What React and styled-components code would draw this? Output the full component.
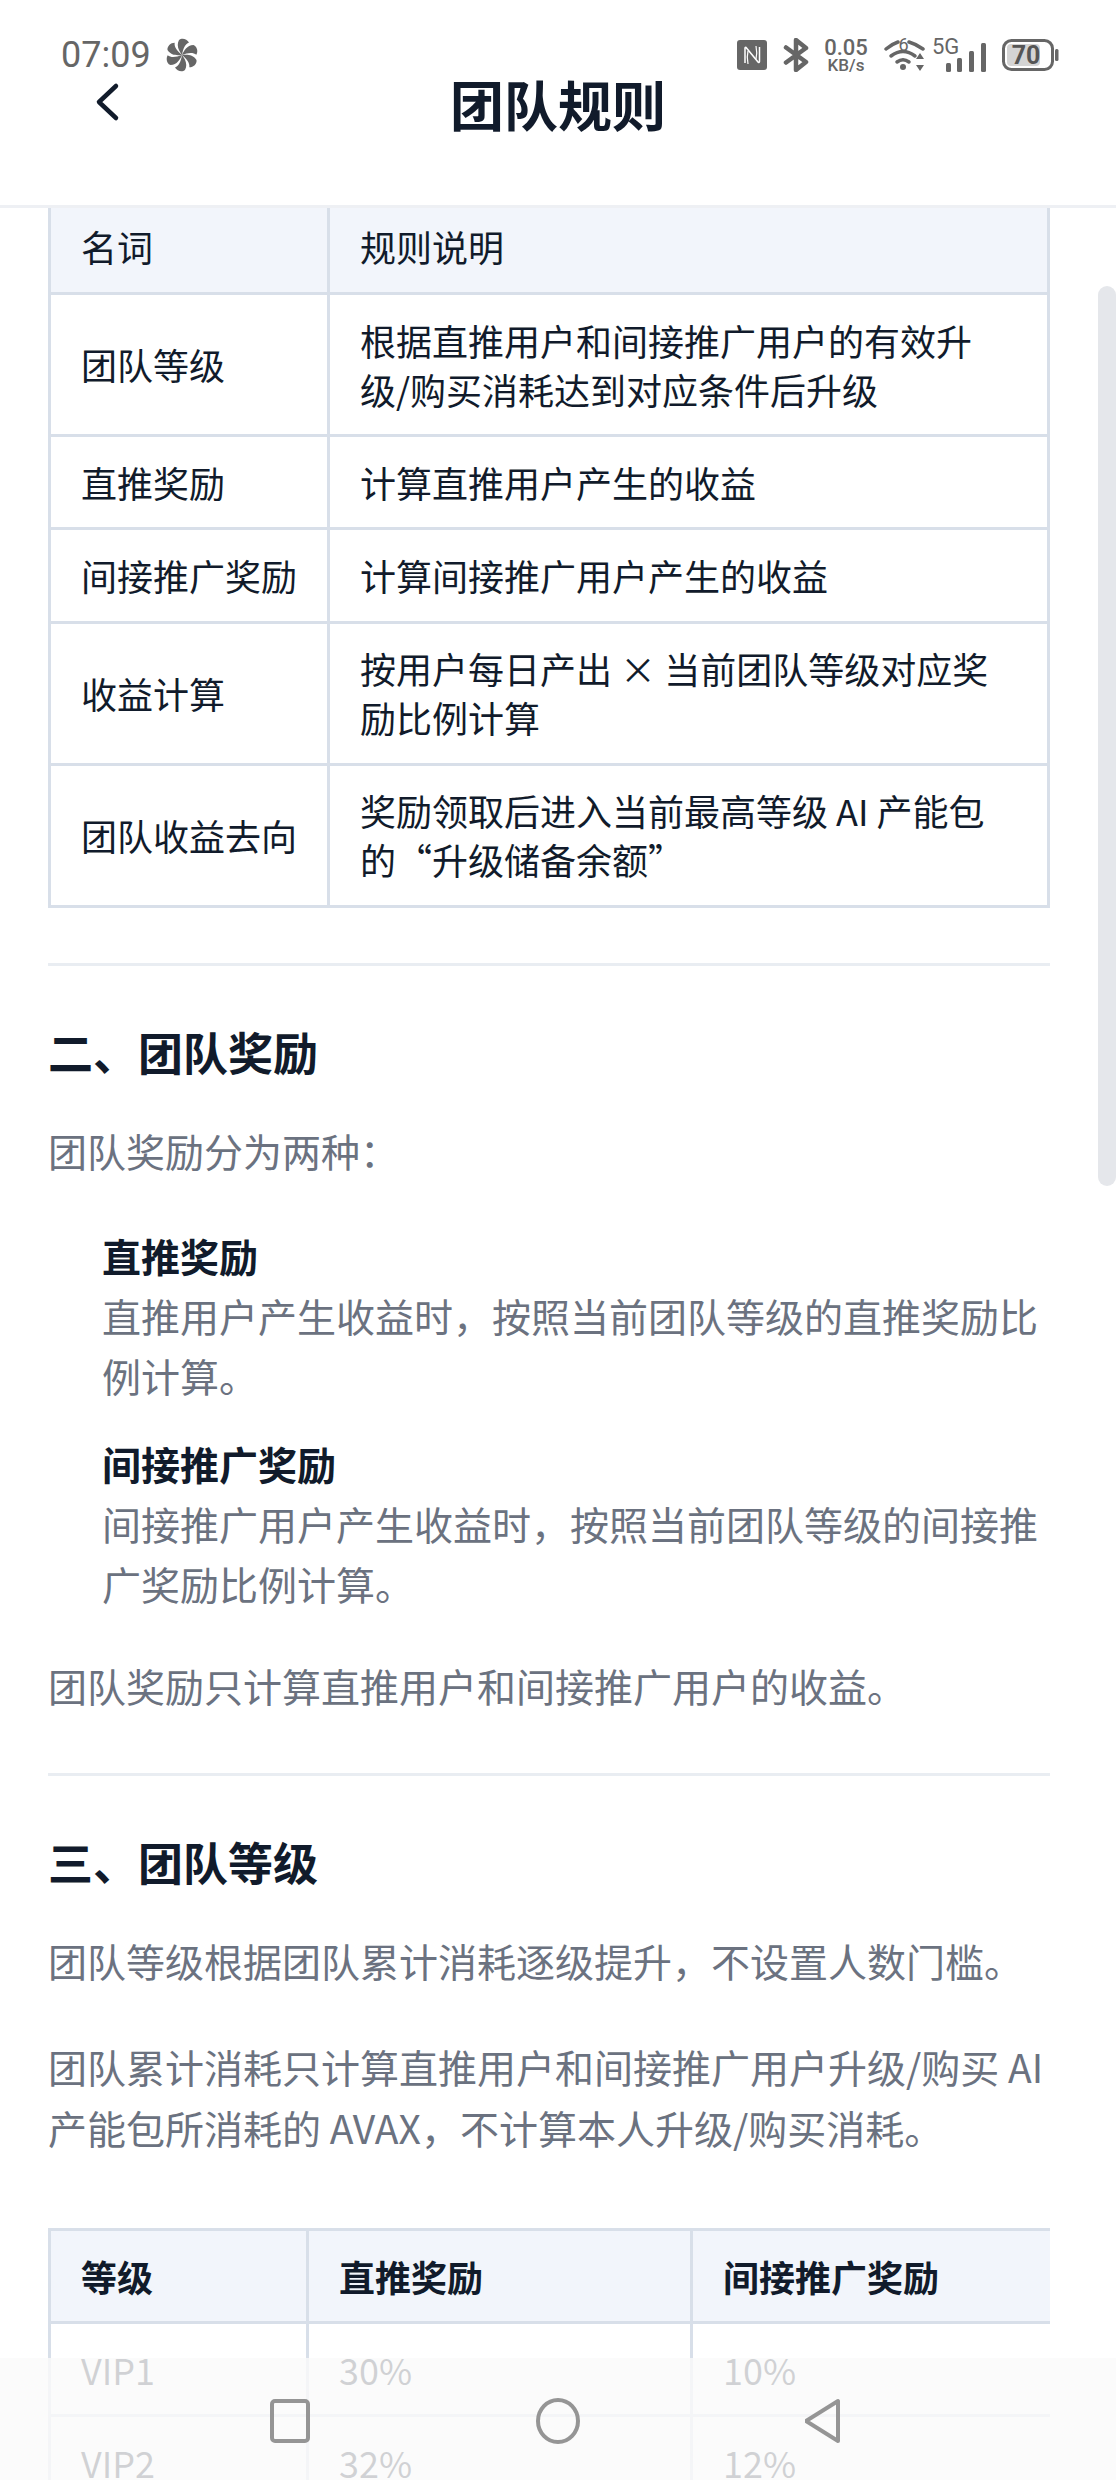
import React from "react";
import styled, { createGlobalStyle } from "styled-components";

const GlobalStyle = createGlobalStyle`
  html, body {
    margin: 0;
    padding: 0;
    background: #fff;
  }
  * {
    box-sizing: border-box;
  }
`;

const cjk = `"Noto Sans CJK SC", "Noto Sans", sans-serif`;

const Screen = styled.div`
  position: relative;
  width: 1116px;
  height: 2480px;
  overflow: hidden;
  background: #fff;
  font-family: ${cjk};
  color: #111b2b;
`;

const StatusBar = styled.div`
  position: absolute;
  top: 36px;
  left: 61px;
  right: 57px;
  height: 38px;
  display: flex;
  align-items: center;
  justify-content: space-between;
  color: #666;
`;

const StatusLeft = styled.div`
  display: flex;
  align-items: center;
  gap: 15px;
`;

const Clock = styled.span`
  font-family: Roboto, sans-serif;
  font-size: 36px;
  line-height: 38px;
`;

const StatusRight = styled.div`
  display: flex;
  align-items: center;
  gap: 16px;
`;

const Speed = styled.div`
  display: flex;
  flex-direction: column;
  align-items: center;
  font-family: Roboto, sans-serif;
  font-weight: 500;
  line-height: 1;
  width: 42px;
`;

const SpeedValue = styled.span`
  font-size: 22px;
  line-height: 19px;
`;

const SpeedUnit = styled.span`
  font-size: 17px;
  line-height: 16px;
`;

const WifiSvg = styled.svg`
  margin-right: -9px;
`;

const Header = styled.header`
  display: grid;
  grid-template-columns: 1fr auto 1fr;
  align-items: center;
  height: 208px;
  padding-top: 2px;
  border-bottom: 3px solid #eef0f4;
`;

const BackButton = styled.button`
  justify-self: start;
  margin: 0 0 4px 94px;
  padding: 0;
  border: 0;
  background: none;
  display: flex;
  color: #111b2b;
`;

const Title = styled.h1`
  margin: 0;
  font-size: 54px;
  line-height: 70px;
  font-weight: 700;
`;

const Content = styled.main`
  padding: 0 66px 0 48px;
`;

const TableClip = styled.div`
  overflow: hidden;
  width: 1002px;
  margin-top: ${(p) => p.$top || 0}px;
`;

const Table = styled.table`
  border-collapse: collapse;
  table-layout: fixed;
  width: ${(p) => p.$width}px;
  font-size: 36px;
  line-height: 49px;
  border: 3px solid #d8dfe9;
  border-top: ${(p) => (p.$cut ? "0" : "3px solid #d8dfe9")};
`;

const HeadCell = styled.th`
  background: #f2f5fb;
  border: 3px solid #d8dfe9;
  ${(p) => p.$cut && "border-top: 0;"}
  padding: ${(p) => (p.$cut ? "14px 30px 21px" : "20.6px 30px")};
  text-align: left;
  font-weight: ${(p) => (p.$bold ? 700 : 400)};
`;

const Cell = styled.td`
  border: 3px solid #d8dfe9;
  padding: 20.6px 30px;
  vertical-align: middle;
  white-space: pre-line;
`;

const TermCell = styled(Cell)`
  padding-right: 0;
  white-space: nowrap;
`;

const Rule = styled.hr`
  margin: ${(p) => p.$top}px 0 0;
  border: 0;
  height: 3px;
  background: #e9edf2;
`;

const Heading = styled.h2`
  margin: 50px 0 0;
  font-size: 45px;
  line-height: 72px;
  font-weight: 700;
`;

const Paragraph = styled.p`
  margin: ${(p) => p.$top}px 0 0;
  font-size: 39px;
  line-height: 61px;
  color: #6b7280;
`;

const RewardList = styled.div`
  margin: 44px 0 0 54px;
  display: flex;
  flex-direction: column;
  gap: 28px;
`;

const RewardItem = styled.div`
  display: flex;
  flex-direction: column;
`;

const RewardName = styled.strong`
  font-size: 39px;
  line-height: 60px;
  font-weight: 700;
  color: #111b2b;
`;

const RewardText = styled.span`
  font-size: 39px;
  line-height: 60px;
  color: #6b7280;
`;

const Scrollbar = styled.div`
  position: absolute;
  top: 286px;
  right: 0;
  width: 18px;
  height: 900px;
  border-radius: 9px;
  background: #e5e7eb;
`;

const NavBar = styled.nav`
  position: absolute;
  left: 0;
  right: 0;
  bottom: 0;
  height: 122px;
  padding-top: 3px;
  background: rgba(250, 250, 250, 0.82);
  display: grid;
  grid-template-columns: repeat(3, 267px);
  justify-content: center;
  align-items: center;
  justify-items: center;
  color: #959595;
`;

const NfcIcon = () => (
  <svg width="30" height="30" viewBox="0 0 30 30">
    <rect width="30" height="30" rx="3" fill="#666" />
    <path d="M8 23V8c0-1 1-1 1.500 0L21 22c.5 1 1.500.5 1.500-.5V7" fill="none" stroke="#fff" strokeWidth="1.500" />
    <path d="M11 24c-1-5-1-9 0-13M19 6c1 5 1 9 0 13" fill="none" stroke="#fff" strokeWidth="1.200" />
  </svg>
);

const BluetoothIcon = () => (
  <svg width="26" height="34" viewBox="0 0 26 34" fill="none" stroke="#666" strokeWidth="4.500" strokeLinejoin="round" strokeLinecap="round">
    <path d="M3 9.500 23 24 13 32V2l10 8L3 24.500" />
  </svg>
);

const WifiIcon = () => (
  <WifiSvg width="42" height="34" viewBox="0 0 42 34" fill="none" stroke="#666" strokeWidth="3.500" strokeLinecap="round">
    <path d="M3 11Q9 6 15 4M26 4Q33 6 40 11" />
    <path d="M8 18Q20 9 32 18" />
    <path d="M14 24Q20 19.500 26 24" />
    <circle cx="20" cy="29" r="3" fill="#666" stroke="none" />
    <text x="20.500" y="13" textAnchor="middle" fontFamily="Roboto, sans-serif" fontSize="18" fill="#666" stroke="none">6</text>
    <path d="M37 15l-4 6h8zM37 33l-4-6h8z" fill="#666" stroke="none" />
  </WifiSvg>
);

const SignalIcon = () => (
  <svg width="54" height="34" viewBox="0 0 54 34" fill="#666">
    <text x="0" y="16" fontFamily="Roboto, sans-serif" fontSize="22">5G</text>
    <rect x="14" y="25" width="5" height="9" rx="1.500" />
    <rect x="25" y="20" width="5" height="14" rx="1.500" />
    <rect x="37" y="13" width="5" height="21" rx="1.500" />
    <rect x="49" y="5" width="5" height="29" rx="1.500" />
  </svg>
);

const BatteryIcon = () => (
  <svg width="57" height="32" viewBox="0 0 57 32">
    <rect x="1.500" y="1.500" width="49" height="29" rx="8" fill="none" stroke="#666" strokeWidth="3" />
    <rect x="5" y="5" width="33" height="22" rx="4" fill="#d4d4d4" />
    <rect x="53" y="10" width="3.500" height="12" rx="1.500" fill="#666" />
    <text x="24" y="25" textAnchor="middle" fontFamily="Roboto, sans-serif" fontWeight="700" fontSize="25" fill="#555">70</text>
  </svg>
);

const FanIcon = () => (
  <svg width="32" height="34" viewBox="-16 -17 32 34" fill="#666">
    {[0, 60, 120, 180, 240, 300].map((deg) => (
      <path key={deg} d="M0 0C-3 -4 -6 -9 -3 -15C0 -17.500 5 -16 7 -12.500C3 -11 1 -6 0 0Z" transform={`rotate(${deg})`} />
    ))}
  </svg>
);

const glossary = [
  ["团队等级", "根据直推用户和间接推广用户的有效升\n级/购买消耗达到对应条件后升级"],
  ["直推奖励", "计算直推用户产生的收益"],
  ["间接推广奖励", "计算间接推广用户产生的收益"],
  ["收益计算", "按用户每日产出 × 当前团队等级对应奖\n励比例计算"],
  ["团队收益去向", "奖励领取后进入当前最高等级 AI 产能包\n的“升级储备余额”"],
];

const levels = [
  ["VIP1", "30%", "10%"],
  ["VIP2", "32%", "12%"],
];

export default function App() {
  return (
    <Screen>
      <GlobalStyle />
      <Header>
        <BackButton aria-label="返回">
          <svg width="28" height="40" viewBox="0 0 28 40" fill="none" stroke="currentColor" strokeWidth="4.500" strokeLinecap="round" strokeLinejoin="round">
            <path d="M22 4 5 20l17 16" />
          </svg>
        </BackButton>
        <Title>团队规则</Title>
      </Header>

      <Content>
        <TableClip>
          <Table $width={1002} $cut>
            <colgroup>
              <col style={{ width: 279 }} />
              <col />
            </colgroup>
            <thead>
              <tr>
                <HeadCell $cut>名词</HeadCell>
                <HeadCell $cut>规则说明</HeadCell>
              </tr>
            </thead>
            <tbody>
              {glossary.map(([term, desc]) => (
                <tr key={term}>
                  <TermCell>{term}</TermCell>
                  <Cell>{desc}</Cell>
                </tr>
              ))}
            </tbody>
          </Table>
        </TableClip>

        <Rule $top={55} />
        <Heading>二、团队奖励</Heading>
        <Paragraph $top={32}>团队奖励分为两种：</Paragraph>
        <RewardList>
          <RewardItem>
            <RewardName>直推奖励</RewardName>
            <RewardText>直推用户产生收益时，按照当前团队等级的直推奖励比例计算。</RewardText>
          </RewardItem>
          <RewardItem>
            <RewardName>间接推广奖励</RewardName>
            <RewardText>间接推广用户产生收益时，按照当前团队等级的间接推广奖励比例计算。</RewardText>
          </RewardItem>
        </RewardList>
        <Paragraph $top={42}>团队奖励只计算直推用户和间接推广用户的收益。</Paragraph>

        <Rule $top={57} />
        <Heading>三、团队等级</Heading>
        <Paragraph $top={32}>团队等级根据团队累计消耗逐级提升，不设置人数门槛。</Paragraph>
        <Paragraph $top={45}>团队累计消耗只计算直推用户和间接推广用户升级/购买 AI 产能包所消耗的 AVAX，不计算本人升级/购买消耗。</Paragraph>

        <TableClip $top={70}>
          <Table $width={1240}>
            <colgroup>
              <col style={{ width: 258 }} />
              <col style={{ width: 384 }} />
              <col />
            </colgroup>
            <thead>
              <tr>
                <HeadCell $bold>等级</HeadCell>
                <HeadCell $bold>直推奖励</HeadCell>
                <HeadCell $bold>间接推广奖励</HeadCell>
              </tr>
            </thead>
            <tbody>
              {levels.map((row) => (
                <tr key={row[0]}>
                  {row.map((value) => (
                    <Cell key={value}>{value}</Cell>
                  ))}
                </tr>
              ))}
            </tbody>
          </Table>
        </TableClip>
      </Content>

      <Scrollbar />

      <StatusBar>
        <StatusLeft>
          <Clock>07:09</Clock>
          <FanIcon />
        </StatusLeft>
        <StatusRight>
          <NfcIcon />
          <BluetoothIcon />
          <Speed>
            <SpeedValue>0.05</SpeedValue>
            <SpeedUnit>KB/s</SpeedUnit>
          </Speed>
          <WifiIcon />
          <SignalIcon />
          <BatteryIcon />
        </StatusRight>
      </StatusBar>

      <NavBar>
        <svg width="42" height="44" viewBox="0 0 42 44" fill="none" stroke="currentColor" strokeWidth="4">
          <rect x="2" y="2" width="36" height="40" rx="3" />
        </svg>
        <svg width="44" height="46" viewBox="0 0 44 46" fill="none" stroke="currentColor" strokeWidth="4">
          <ellipse cx="22" cy="23" rx="20" ry="21" />
        </svg>
        <svg width="40" height="46" viewBox="3 0 40 46" fill="none" stroke="currentColor" strokeWidth="4" strokeLinejoin="round">
          <path d="M36 3v40L4 23z" />
        </svg>
      </NavBar>
    </Screen>
  );
}
